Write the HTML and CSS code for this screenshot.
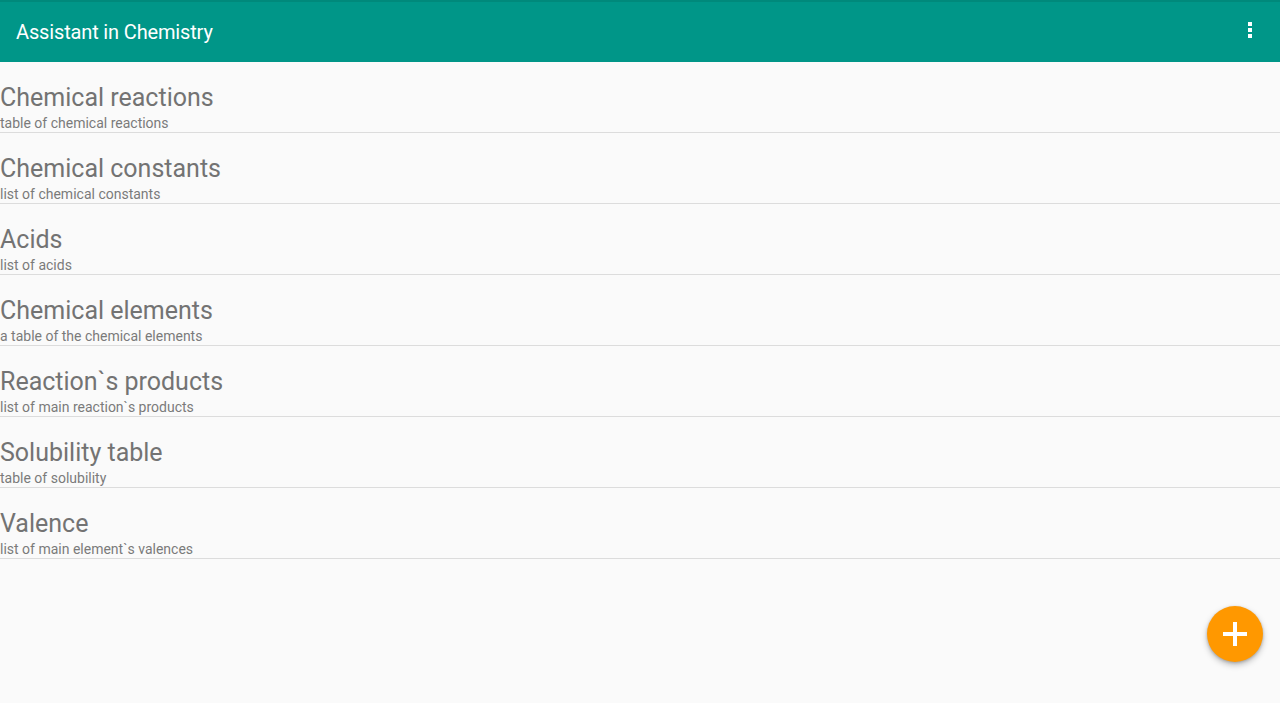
FILE: index.html
```html
<!DOCTYPE html>
<html>
<head>
<meta charset="utf-8">
<link rel="stylesheet" href="styles.css">
</head>
<body>
<header class="appbar">
  <h1 class="appbar-title">Assistant in Chemistry</h1>
  <button class="overflow" aria-label="More options">
    <span class="dot"></span><span class="dot"></span><span class="dot"></span>
  </button>
</header>
<ul class="list">
  <li class="item"><div class="item-title">Chemical reactions</div><div class="item-sub">table of chemical reactions</div></li>
  <li class="item"><div class="item-title">Chemical constants</div><div class="item-sub">list of chemical constants</div></li>
  <li class="item"><div class="item-title">Acids</div><div class="item-sub">list of acids</div></li>
  <li class="item"><div class="item-title">Chemical elements</div><div class="item-sub">a table of the chemical elements</div></li>
  <li class="item"><div class="item-title">Reaction`s products</div><div class="item-sub">list of main reaction`s products</div></li>
  <li class="item"><div class="item-title">Solubility table</div><div class="item-sub">table of solubility</div></li>
  <li class="item"><div class="item-title">Valence</div><div class="item-sub">list of main element`s valences</div></li>
</ul>
<button class="fab" aria-label="Add">
  <svg width="24" height="24" viewBox="0 0 24 24"><rect x="10" y="0" width="4" height="24" fill="#fff"/><rect x="0" y="10" width="24" height="4" fill="#fff"/></svg>
</button>
</body>
</html>
```

FILE: styles.css
```css
html, body {
  margin: 0;
  padding: 0;
  background: #fafafa;
  font-family: Roboto, "Noto Sans", sans-serif;
  height: 100%;
  overflow: hidden;
}
.appbar {
  height: 60px;
  border-top: 2px solid #00897b;
  background: #009688;
  display: flex;
  align-items: center;
  justify-content: space-between;
  padding: 0 0 0 16px;
}
.appbar-title {
  margin: 0 0 1px 0;
  color: #fff;
  font-size: 20px;
  font-weight: 400;
  line-height: 24px;
  letter-spacing: -0.15px;
}
.overflow {
  background: none;
  border: 0;
  width: 60px;
  height: 60px;
  display: flex;
  flex-direction: column;
  align-items: center;
  justify-content: flex-start;
  gap: 2px;
  padding: 20px 0 0 0;
}
.dot {
  width: 4px;
  height: 4px;
  background: #fff;
  display: block;
}
.list {
  list-style: none;
  margin: 0;
  padding: 0;
}
.item {
  height: 70px;
  border-bottom: 1px solid #dcdcdc;
  display: flex;
  flex-direction: column;
}
.item-title {
  margin-top: 20px;
  font-size: 25px;
  line-height: 31px;
  color: #737373;
}
.item-sub {
  padding-top: 1px;
  font-size: 14px;
  line-height: 18px;
  color: #7a7a7a;
}
.fab {
  position: fixed;
  right: 17px;
  bottom: 41px;
  width: 56px;
  height: 56px;
  border-radius: 50%;
  border: 0;
  padding: 0;
  background: #ff9800;
  display: flex;
  align-items: center;
  justify-content: center;
  box-shadow: 0 3px 6px rgba(0,0,0,0.25), 0 1px 3px rgba(0,0,0,0.2);
}
```
